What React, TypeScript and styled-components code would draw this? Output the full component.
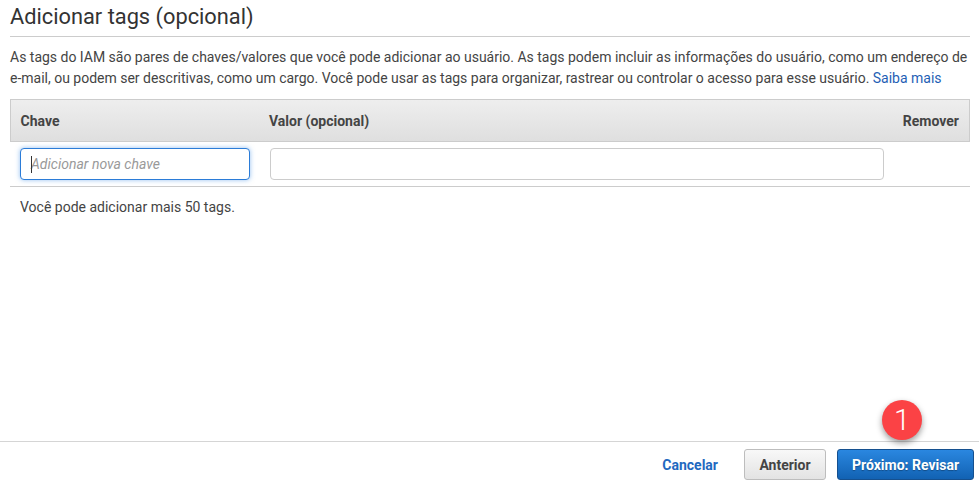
import { FC } from 'react';
import styled, { createGlobalStyle } from 'styled-components';

const GlobalStyle = createGlobalStyle`
  html, body {
    margin: 0;
    padding: 0;
    background: #fff;
  }
  body {
    font-family: Roboto, "Liberation Sans", Arial, sans-serif;
    font-size: 14px;
    color: #444;
  }
`;

const Page = styled.div`
  position: relative;
  width: 979px;
  height: 485px;
  display: flex;
  flex-direction: column;
  overflow: hidden;
`;

const Content = styled.main`
  flex: 1;
  padding: 0 9px 0 10px;
`;

const Title = styled.h2`
  margin: 0;
  height: 36px;
  box-sizing: content-box;
  border-bottom: 1px solid #ccc;
  font-size: 21.8px;
  font-weight: 400;
  line-height: 34px;
  color: #333;
`;

const Intro = styled.p`
  margin: 10px 0 10px;
  font-size: 14px;
  line-height: 21px;
  letter-spacing: -0.007px;
  color: #444;
`;

const LearnMore = styled.a`
  color: #1f5fb5;
  text-decoration: none;
`;

const HeaderRow = styled.div`
  display: grid;
  grid-template-columns: 248.5px 1fr auto;
  align-items: center;
  height: 43px;
  box-sizing: border-box;
  padding: 0 10px 0 9.5px;
  border: 1px solid #ccc;
  background: linear-gradient(#eeeeee, #dfdfdf);
  font-weight: 700;
  color: #444;
`;

const InputRow = styled.div`
  display: grid;
  grid-template-columns: 230px 614px;
  column-gap: 20px;
  padding: 6px 10px;
  border-bottom: 1px solid #ccc;
`;

const Field = styled.div<{ $focused?: boolean }>`
  position: relative;
  height: 32px;
  box-sizing: border-box;
  display: flex;
  align-items: center;
  padding-left: 10px;
  background: #fff;
  border-radius: 4px;
  border: 1px solid ${(p) => (p.$focused ? '#2b7cd8' : '#ccc')};
  box-shadow: ${(p) => (p.$focused ? '0 0 5px rgba(60, 140, 230, 0.55)' : 'none')};
`;

const Placeholder = styled.span`
  font-style: italic;
  color: #999;
  line-height: 1;
`;

const Caret = styled.span`
  position: absolute;
  left: 10px;
  top: 7px;
  width: 1px;
  height: 17px;
  background: #333;
`;

const Hint = styled.p`
  margin: 12px 0 0 10px;
  line-height: 17px;
  color: #444;
`;

const Footer = styled.footer`
  height: 44px;
  box-sizing: border-box;
  border-top: 1px solid #d5d5d5;
  display: flex;
  justify-content: flex-end;
  align-items: flex-start;
  padding: 7px 5px 0 0;
`;

const CancelLink = styled.a`
  margin: 8px 26px 0 0;
  font-weight: 700;
  color: #1f69c0;
  line-height: 17px;
`;

const Button = styled.button<{ $primary?: boolean }>`
  height: 31px;
  box-sizing: border-box;
  padding: 0;
  border-radius: 3px;
  font: 700 14px Roboto, "Liberation Sans", Arial, sans-serif;
  border: 1px solid ${(p) => (p.$primary ? '#15508f' : '#bdbdbd')};
  width: ${(p) => (p.$primary ? '137px' : '82px')};
  margin-left: ${(p) => (p.$primary ? '11px' : '0')};
  color: ${(p) => (p.$primary ? '#fff' : '#444')};
  background: ${(p) =>
    p.$primary ? 'linear-gradient(#2a87e0, #1262b3)' : 'linear-gradient(#f8f8f8, #e3e3e3)'};
  text-shadow: ${(p) => (p.$primary ? '0 1px 1px rgba(0, 0, 0, 0.3)' : 'none')};
`;

const StepBadge = styled.div`
  position: absolute;
  left: 882px;
  top: 400px;
  width: 40px;
  height: 40px;
  border-radius: 50%;
  background: #fb4245;
  box-shadow: 0 3px 6px rgba(0, 0, 0, 0.4);
  color: #fff;
  font-size: 29px;
  font-weight: 300;
  line-height: 40px;
  text-align: center;
`;

const App: FC = () => {
  return (
    <Page>
      <GlobalStyle />
      <Content>
        <Title>Adicionar tags (opcional)</Title>
        <Intro>
          As tags do IAM são pares de chaves/valores que você pode adicionar ao usuário. As tags
          podem incluir as informações do usuário, como um endereço de e-mail, ou podem ser
          descritivas, como um cargo. Você pode usar as tags para organizar, rastrear ou controlar
          o acesso para esse usuário. <LearnMore>Saiba mais</LearnMore>
        </Intro>
        <HeaderRow>
          <span>Chave</span>
          <span>Valor (opcional)</span>
          <span>Remover</span>
        </HeaderRow>
        <InputRow>
          <Field $focused>
            <Caret />
            <Placeholder>Adicionar nova chave</Placeholder>
          </Field>
          <Field />
        </InputRow>
        <Hint>Você pode adicionar mais 50 tags.</Hint>
      </Content>
      <Footer>
        <CancelLink>Cancelar</CancelLink>
        <Button>Anterior</Button>
        <Button $primary>Próximo: Revisar</Button>
      </Footer>
      <StepBadge>1</StepBadge>
    </Page>
  );
};

export default App;
